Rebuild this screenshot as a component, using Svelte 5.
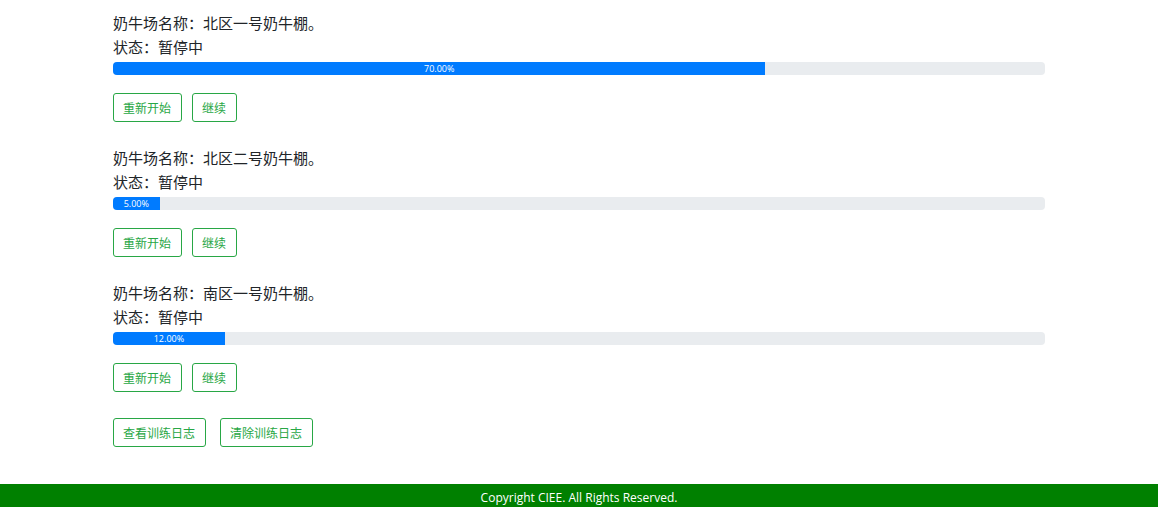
<script>
  const farms = [
    { name: '北区一号奶牛棚', progress: 70 },
    { name: '北区二号奶牛棚', progress: 5 },
    { name: '南区一号奶牛棚', progress: 12 }
  ];
</script>

<main>
  {#each farms as farm}
    <section>
      <p>奶牛场名称：{farm.name}。</p>
      <p>状态：暂停中</p>
      <div class="progress" role="progressbar" aria-label={farm.name} aria-valuenow={farm.progress} aria-valuemin="0" aria-valuemax="100">
        <div class="bar" style="width: {farm.progress}%">{farm.progress.toFixed(2)}%</div>
      </div>
      <div class="actions">
        <button type="button">重新开始</button>
        <button type="button">继续</button>
      </div>
    </section>
  {/each}
  <div class="actions logs">
    <button type="button">查看训练日志</button>
    <button type="button">清除训练日志</button>
  </div>
</main>
<footer>Copyright CIEE. All Rights Reserved.</footer>

<style>
  :global(body) {
    margin: 0;
    background: #fff;
    color: #212529;
    font-family: "Open Sans", "Noto Sans CJK SC", sans-serif;
  }
  main {
    box-sizing: border-box;
    max-width: 932px;
    margin: 0 auto;
    padding: 11px 0 37px;
  }
  section {
    margin-bottom: 24px;
  }
  p {
    margin: 0;
    font: 15px/24px "Noto Sans CJK SC", sans-serif;
  }
  .progress {
    display: flex;
    height: 13px;
    margin: 3px 0 18px;
    overflow: hidden;
    border-radius: 4px;
    background: #e9ecef;
  }
  .bar {
    background: #007bff;
    color: #fff;
    font-size: 9px;
    line-height: 13px;
    text-align: center;
  }
  .actions {
    display: flex;
    gap: 10px;
  }
  .logs {
    gap: 14px;
    padding-top: 2px;
  }
  button {
    box-sizing: border-box;
    height: 29px;
    padding: 0 10px 0 9px;
    border: 1px solid #28a745;
    border-radius: 3px;
    background: transparent;
    color: #28a745;
    font: 12px/18px "Noto Sans CJK SC", sans-serif;
    cursor: pointer;
  }
  button:hover {
    background: #28a745;
    color: #fff;
  }
  footer {
    padding: 5px 0 0;
    background: #008000;
    color: #fff;
    font-size: 12px;
    line-height: 18px;
    text-align: center;
  }
</style>
